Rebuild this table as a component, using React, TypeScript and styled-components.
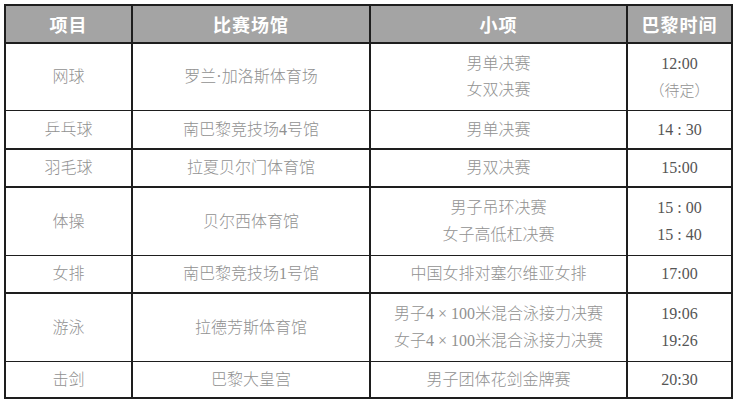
import React from "react";
import styled, { createGlobalStyle } from "styled-components";

const Global = createGlobalStyle`
  html, body { margin: 0; padding: 0; background: #ffffff; }
  body { font-family: "Noto Sans CJK SC", "Noto Sans", sans-serif; }
`;

const COLS = "125px 238px 257px 105px";

const Table = styled.div`
  margin: 4px 0 0 4px;
  width: 729px;
  box-sizing: border-box;
  border: 2px solid #1e1e1e;
  display: flex;
  flex-direction: column;
`;

const Row = styled.div<{ $h: number; $line: number; $head?: boolean }>`
  display: grid;
  grid-template-columns: ${COLS};
  height: ${(p) => p.$h}px;
  box-sizing: border-box;
  border-bottom: ${(p) => p.$line}px solid #1e1e1e;
  background: ${(p) => (p.$head ? "#a4a4a4" : "#ffffff")};
`;

const Cell = styled.div<{ $first?: boolean; $gap?: number }>`
  display: flex;
  flex-direction: column;
  align-items: center;
  justify-content: center;
  gap: ${(p) => p.$gap ?? 9}px;
  border-left: ${(p) => (p.$first ? "none" : "2px solid #1e1e1e")};
  box-sizing: border-box;
  overflow: hidden;
`;

const HeadText = styled.span`
  font-family: "Noto Sans CJK SC", sans-serif;
  font-weight: 700;
  font-size: 18px;
  letter-spacing: 1px;
  color: #ffffff;
  line-height: 1;
`;

const Text = styled.span`
  font-family: "Liberation Serif", "Noto Sans CJK SC", serif;
  font-weight: 300;
  font-size: 16px;
  color: #919191;
  line-height: 18px;
  white-space: nowrap;
`;

const Time = styled.span`
  font-family: "Liberation Serif", "Noto Sans CJK SC", serif;
  font-size: 16px;
  color: #555555;
  line-height: 18px;
  white-space: nowrap;
`;

const Note = styled.span`
  font-family: "Noto Sans CJK SC", sans-serif;
  font-weight: 300;
  font-size: 15px;
  color: #919191;
  line-height: 18px;
`;

type Entry = {
  sport: string;
  venue: string;
  events: string[];
  times: React.ReactNode[];
  h: number;
  line: number;
  gap?: number;
};

const rows: Entry[] = [
  {
    sport: "网球",
    venue: "罗兰·加洛斯体育场",
    events: ["男单决赛", "女双决赛"],
    times: [<Time key="a">12:00</Time>, <Note key="b">（待定）</Note>],
    h: 67,
    line: 1,
    gap: 8,
  },
  { sport: "乒乓球", venue: "南巴黎竞技场4号馆", events: ["男单决赛"], times: [<Time key="a">14 : 30</Time>], h: 39, line: 2 },
  { sport: "羽毛球", venue: "拉夏贝尔门体育馆", events: ["男双决赛"], times: [<Time key="a">15:00</Time>], h: 38, line: 2 },
  {
    sport: "体操",
    venue: "贝尔西体育馆",
    events: ["男子吊环决赛", "女子高低杠决赛"],
    times: [<Time key="a">15 : 00</Time>, <Time key="b">15 : 40</Time>],
    h: 68,
    line: 1,
    gap: 9,
  },
  { sport: "女排", venue: "南巴黎竞技场1号馆", events: ["中国女排对塞尔维亚女排"], times: [<Time key="a">17:00</Time>], h: 38, line: 2 },
  {
    sport: "游泳",
    venue: "拉德芳斯体育馆",
    events: ["男子4 × 100米混合泳接力决赛", "女子4 × 100米混合泳接力决赛"],
    times: [<Time key="a">19:06</Time>, <Time key="b">19:26</Time>],
    h: 68,
    line: 1,
    gap: 9,
  },
  { sport: "击剑", venue: "巴黎大皇宫", events: ["男子团体花剑金牌赛"], times: [<Time key="a">20:30</Time>], h: 35, line: 0 },
];

export default function App() {
  return (
    <>
      <Global />
      <Table>
        <Row $h={38} $line={2} $head>
          <Cell $first>
            <HeadText>项目</HeadText>
          </Cell>
          <Cell>
            <HeadText>比赛场馆</HeadText>
          </Cell>
          <Cell>
            <HeadText>小项</HeadText>
          </Cell>
          <Cell>
            <HeadText>巴黎时间</HeadText>
          </Cell>
        </Row>
        {rows.map((r) => (
          <Row key={r.sport} $h={r.h} $line={r.line}>
            <Cell $first>
              <Text>{r.sport}</Text>
            </Cell>
            <Cell>
              <Text>{r.venue}</Text>
            </Cell>
            <Cell $gap={r.gap}>
              {r.events.map((e) => (
                <Text key={e}>{e}</Text>
              ))}
            </Cell>
            <Cell $gap={r.gap}>{r.times}</Cell>
          </Row>
        ))}
      </Table>
    </>
  );
}
